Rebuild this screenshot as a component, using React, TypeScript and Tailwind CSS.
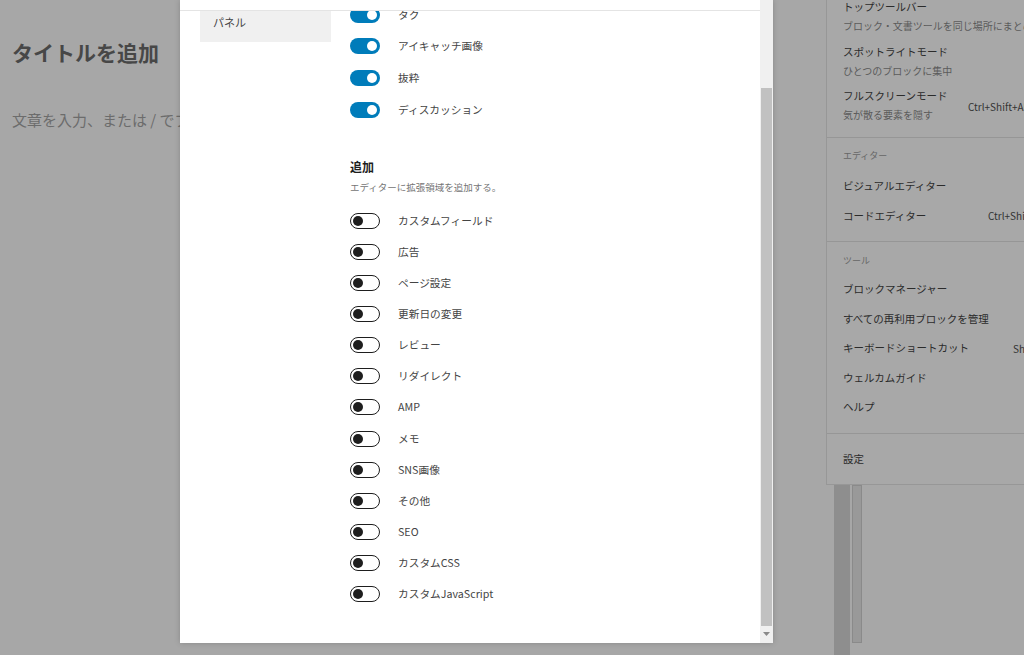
import React from 'react';

const Toggle: React.FC<{ on?: boolean }> = ({ on }) =>
  on ? (
    <span className="relative block h-[16px] w-[30px] shrink-0 rounded-full bg-[#007cba]">
      <span className="absolute right-[3px] top-[3px] h-[10px] w-[10px] rounded-full bg-white" />
    </span>
  ) : (
    <span className="relative block h-[16px] w-[30px] shrink-0 rounded-full border border-[#1e1e1e] bg-white">
      <span className="absolute left-[2px] top-[2px] h-[10px] w-[10px] rounded-full bg-[#1e1e1e]" />
    </span>
  );

const onItems = ['タク', 'アイキャッチ画像', '抜粋', 'ディスカッション'];
const offItems = [
  'カスタムフィールド',
  '広告',
  'ページ設定',
  '更新日の変更',
  'レビュー',
  'リダイレクト',
  'AMP',
  'メモ',
  'SNS画像',
  'その他',
  'SEO',
  'カスタムCSS',
  'カスタムJavaScript',
];

const viewItems = [
  { title: 'トップツールバー', desc: 'ブロック・文書ツールを同じ場所にまとめる' },
  { title: 'スポットライトモード', desc: 'ひとつのブロックに集中' },
  { title: 'フルスクリーンモード', desc: '気が散る要素を隠す', shortcut: 'Ctrl+Shift+Alt+F' },
];

const toolItems = [
  { title: 'ブロックマネージャー' },
  { title: 'すべての再利用ブロックを管理' },
  { title: 'キーボードショートカット', shortcut: 'Shift+Alt+H', pad: 'w-[170px]' },
  { title: 'ウェルカムガイド' },
  { title: 'ヘルプ' },
];

const App: React.FC = () => {
  return (
    <div className="flex h-[655px] w-[1024px] overflow-hidden bg-[#a7a7a7] font-['Noto_Sans_CJK_JP','Noto_Sans',sans-serif]">
      {/* editor behind the overlay */}
      <div className="w-[180px] shrink-0 overflow-hidden pl-[12px] pt-[37px]">
        <div className="whitespace-nowrap text-[21px] font-bold leading-[30px] text-[#474747]">タイトルを追加</div>
        <div className="mt-[42px] whitespace-nowrap text-[15px] leading-[22px] text-[#6c6c6c]">
          文章を入力、または / でブロックを選択
        </div>
      </div>

      {/* preferences modal */}
      <div className="flex h-[643px] w-[593px] shrink-0 bg-white shadow-[0_0_6px_rgba(0,0,0,0.18)]">
        <div className="flex min-w-0 flex-1 flex-col">
          <div className="h-[11px] shrink-0 border-b border-[#e4e4e4]" />
          <div className="flex flex-1 overflow-hidden">
            <div className="shrink-0 pl-[20px]">
              <div className="h-[31px] w-[131px] bg-[#f0f0f0] pl-[13px] pt-[3px] text-[11px] leading-[16px] text-[#444]">
                パネル
              </div>
            </div>
            <div className="ml-[19px] flex-1">
              <div className="-mt-[12px]">
                {onItems.map((t) => (
                  <div key={t} className="flex h-[31.6px] items-center gap-[18px]">
                    <Toggle on />
                    <span className="text-[10.7px] text-[#444]">{t}</span>
                  </div>
                ))}
              </div>
              <div className="mt-[33px] text-[12px] font-bold leading-[18px] text-[#1e1e1e]">追加</div>
              <div className="mt-[3px] text-[9.5px] leading-[16px] text-[#757575]">エディターに拡張領域を追加する。</div>
              <div className="mt-[10px]">
                {offItems.map((t) => (
                  <div key={t} className="flex h-[31.1px] items-center gap-[18px]">
                    <Toggle />
                    <span className="text-[10.7px] text-[#444]">{t}</span>
                  </div>
                ))}
              </div>
            </div>
          </div>
        </div>
        <div className="flex w-[13px] shrink-0 flex-col bg-[#f0f0f0]">
          <div className="mx-[1px] mt-[88px] h-[538px] bg-[#c1c1c1]" />
          <div className="mt-[2px] flex h-[12px] items-center justify-center">
            <svg width="7" height="4" viewBox="0 0 7 4">
              <path d="M0 0h7L3.5 4z" fill="#8a8a8a" />
            </svg>
          </div>
        </div>
      </div>

      <div className="w-[53px] shrink-0" />

      {/* options menu behind the overlay */}
      <div className="flex w-[198px] shrink-0 flex-col">
        <div className="h-[485px] shrink-0 overflow-hidden border-b border-l border-[#979797] bg-[#a8a8a8]">
          <div className="-mt-[2px] pb-[5px] pl-[16px]">
            {viewItems.map((it) => (
              <div key={it.title} className="flex h-[44.5px] whitespace-nowrap">
                <div className="w-[125px] shrink-0">
                  <div className="text-[10.5px] leading-[18px] text-[#2b2b2b]">{it.title}</div>
                  <div className="mt-[2px] text-[10px] leading-[16px] text-[#5b5b5b]">{it.desc}</div>
                </div>
                {it.shortcut && (
                  <div className="pt-[12px] text-[10px] leading-[16px] text-[#333]">{it.shortcut}</div>
                )}
              </div>
            ))}
          </div>
          <div className="border-t border-[#969696] pb-[10px] pl-[16px] pt-[11px]">
            <div className="text-[9px] leading-[14px] text-[#666]">エディター</div>
            <div className="mt-[8px] flex h-[30px] items-center whitespace-nowrap text-[10.5px] text-[#2b2b2b]">
              ビジュアルエディター
            </div>
            <div className="flex h-[30px] items-center whitespace-nowrap">
              <span className="w-[145px] shrink-0 text-[10.5px] text-[#2b2b2b]">コードエディター</span>
              <span className="text-[10px] text-[#333]">Ctrl+Shift+Alt+M</span>
            </div>
          </div>
          <div className="border-t border-[#969696] pb-[11px] pl-[16px] pt-[12px]">
            <div className="text-[9px] leading-[14px] text-[#666]">ツール</div>
            <div className="mt-[7px]">
              {toolItems.map((it) => (
                <div key={it.title} className="flex h-[29.5px] items-center whitespace-nowrap">
                  <span className={it.pad ? 'w-[170px] shrink-0 text-[10.5px] text-[#2b2b2b]' : 'text-[10.5px] text-[#2b2b2b]'}>
                    {it.title}
                  </span>
                  {it.shortcut && <span className="text-[10px] text-[#333]">{it.shortcut}</span>}
                </div>
              ))}
            </div>
          </div>
          <div className="border-t border-[#969696] pb-[10px] pl-[16px] pt-[10px]">
            <div className="flex h-[30px] items-center text-[10.5px] text-[#2b2b2b]">設定</div>
          </div>
        </div>
        <div className="flex flex-1 gap-[2px] pl-[8px]">
          <div className="w-[16px] bg-[#8e8e8e]" />
          <div className="h-[158px] w-[10px] border border-[#8a8a8a] bg-[#999]" />
        </div>
      </div>
    </div>
  );
};

export default App;
